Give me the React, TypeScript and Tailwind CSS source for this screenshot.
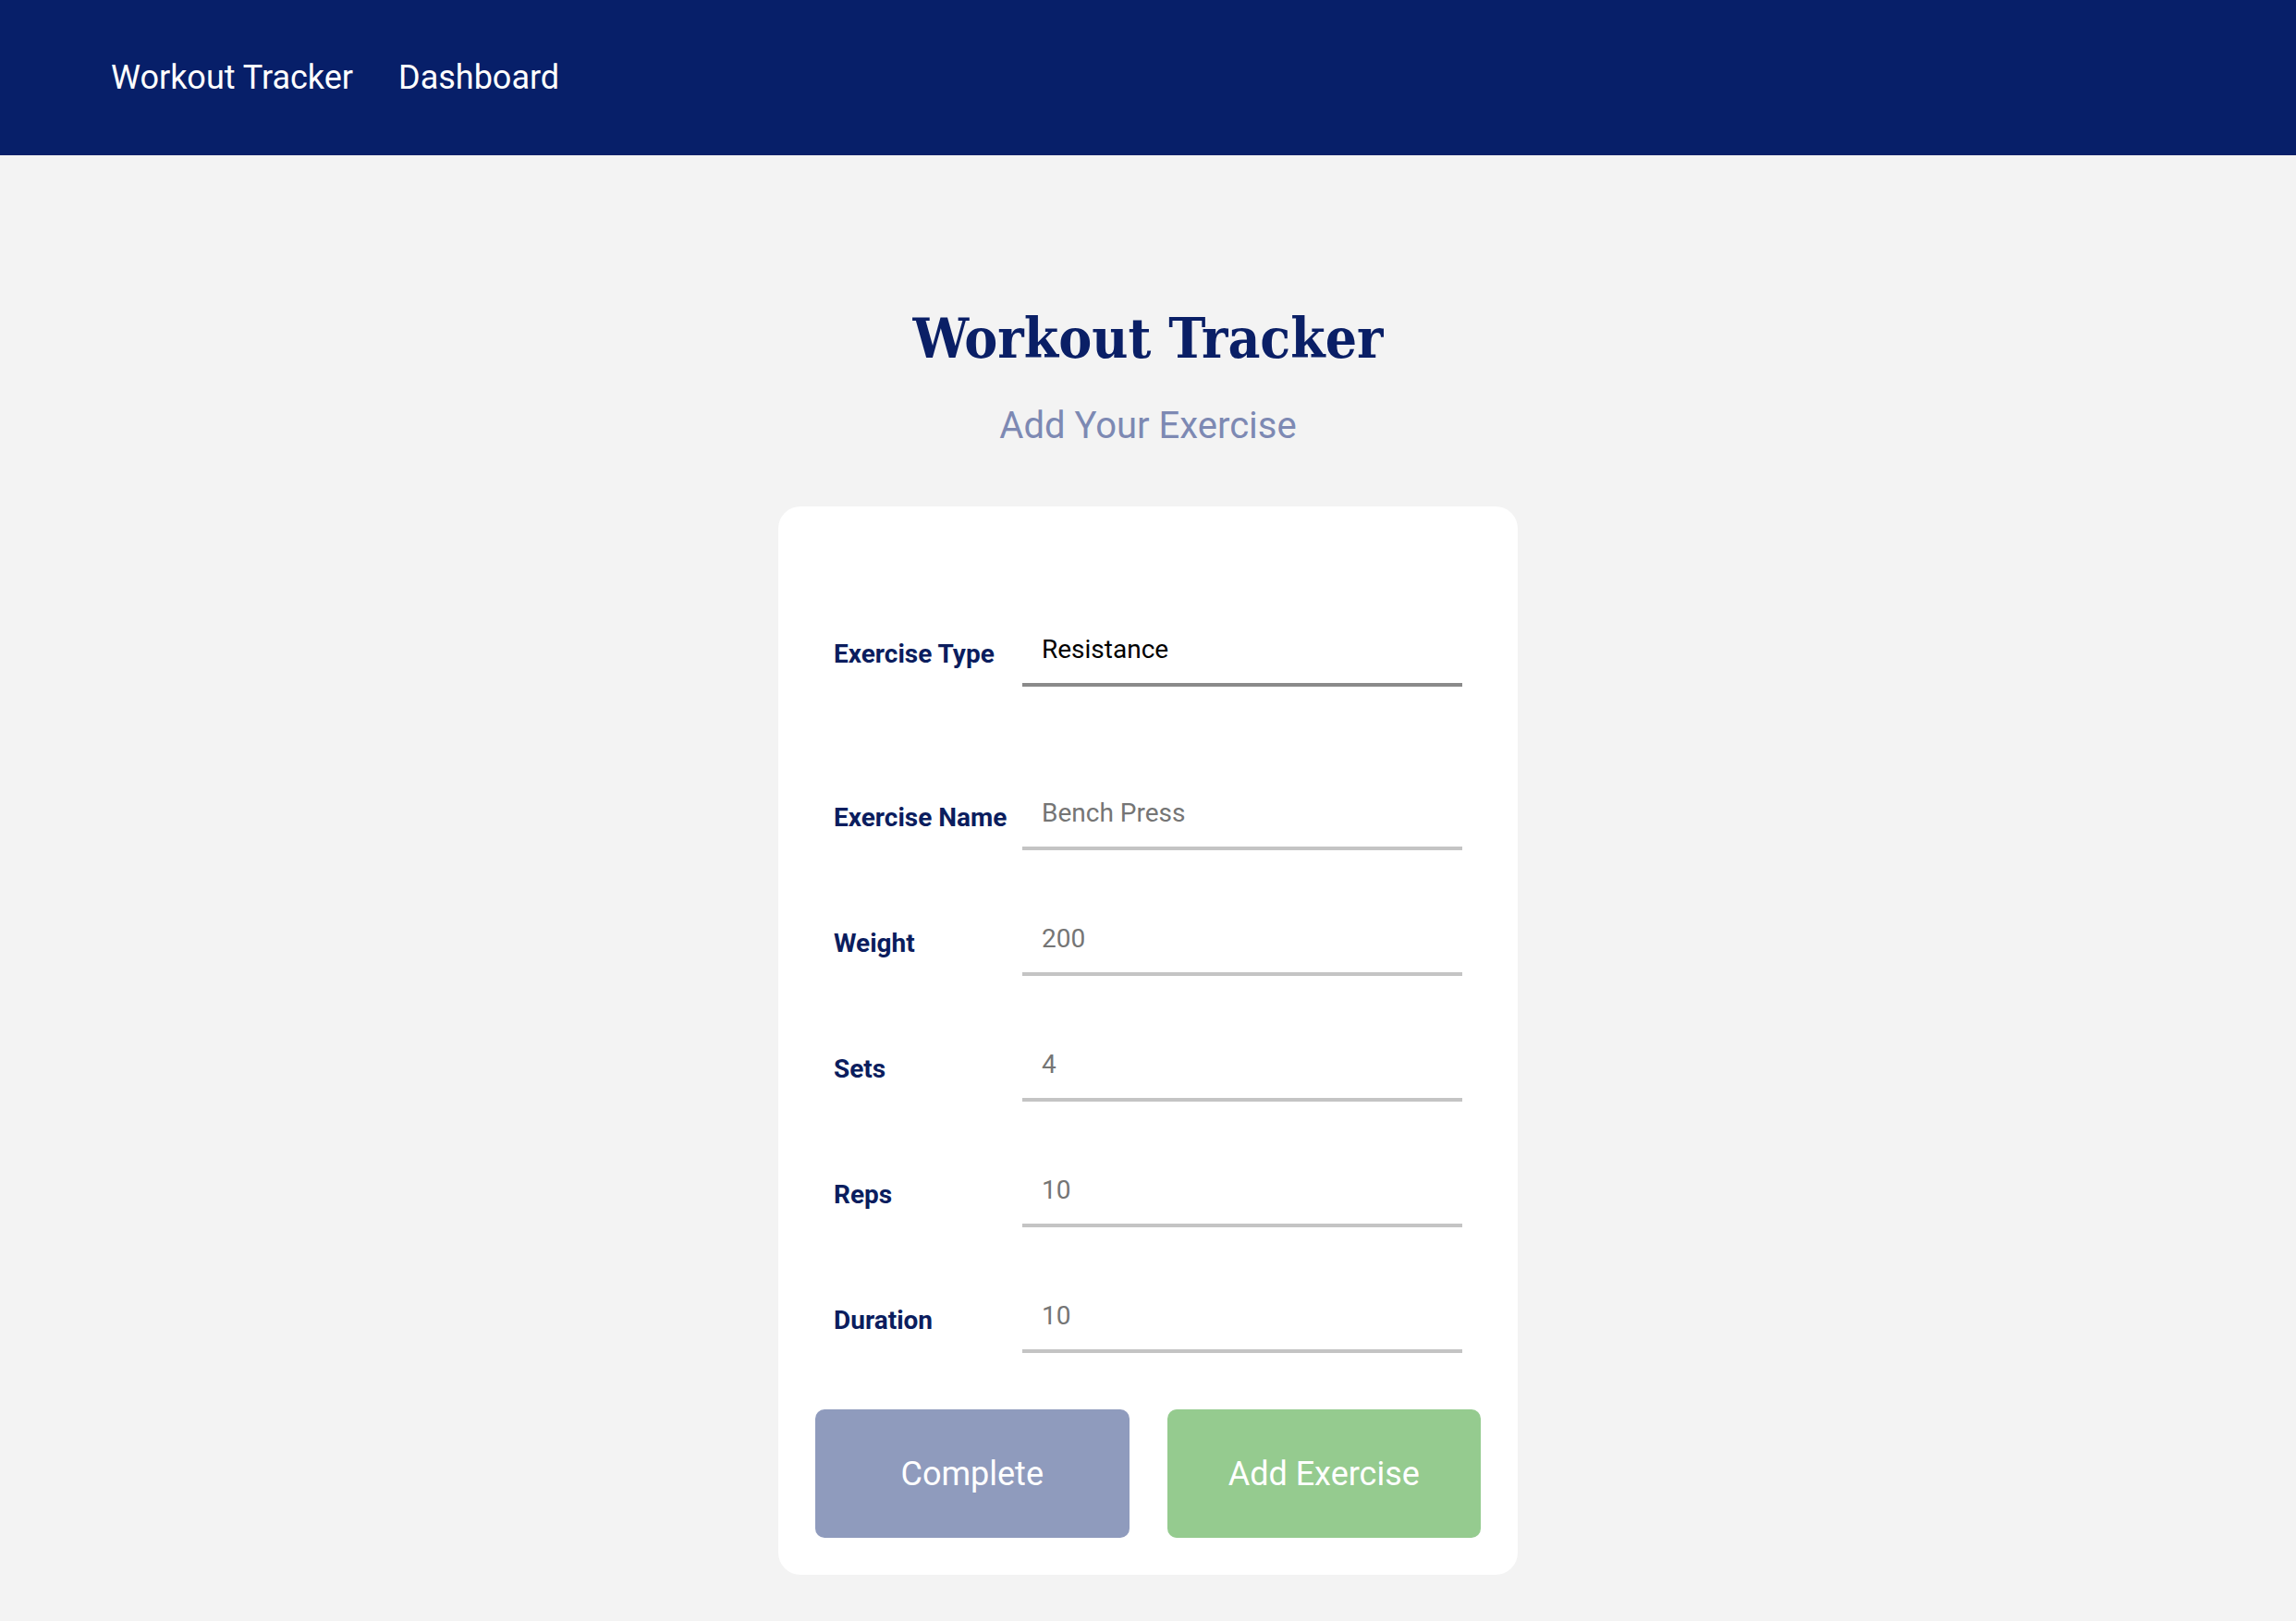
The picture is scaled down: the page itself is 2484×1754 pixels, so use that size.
const fields = [
  { label: "Weight", placeholder: "200" },
  { label: "Sets", placeholder: "4" },
  { label: "Reps", placeholder: "10" },
  { label: "Duration", placeholder: "10" },
];

function Row({ label, value, placeholder, dark }: { label: string; value?: string; placeholder?: string; dark?: boolean }) {
  return (
    <div className="flex items-center h-[80px] pl-[20px] pr-[20px]">
      <label className="w-[204px] shrink-0 pt-[10px] text-[28px] font-bold text-[#0b1d5e]">{label}</label>
      <input
        readOnly
        value={value}
        placeholder={placeholder}
        className={`flex-1 min-w-0 h-full bg-transparent outline-none pl-[21px] pr-[20px] pt-[2px] text-[28px] text-black placeholder:text-[#757575] border-b-4 ${
          dark ? "border-[#8a8a8a]" : "border-[#c4c4c4]"
        }`}
      />
    </div>
  );
}

export default function App() {
  return (
    <div className="min-h-[1754px] bg-[#f3f3f3] font-['Roboto',sans-serif]">
      <nav className="h-[168px] bg-[#071f69] flex items-center gap-[49px] px-[120px] text-white text-[36px]">
        <a href="#">Workout Tracker</a>
        <a href="#">Dashboard</a>
      </nav>

      <main className="flex flex-col items-center pt-[160px]">
        <h1 className="text-[60px] leading-[77px] font-bold text-[#0a1f66] font-['DejaVu_Serif_Condensed','DejaVu_Serif',serif]">
          Workout Tracker
        </h1>
        <h2 className="mt-[32px] text-[40px] leading-[48px] text-[#7d89b3]">Add Your Exercise</h2>

        <div className="mt-[63px] w-[800px] bg-white rounded-[24px] px-[40px] pt-[115px] pb-[40px]">
          <Row label="Exercise Type" value="Resistance" dark />
          <div className="mt-[97px] flex flex-col gap-[56px]">
            <Row label="Exercise Name" placeholder="Bench Press" />
            {fields.map((f) => (
              <Row key={f.label} label={f.label} placeholder={f.placeholder} />
            ))}
          </div>
          <div className="mt-[61px] grid grid-cols-2 gap-[41px]">
            <button className="h-[139px] rounded-[10px] bg-[#8f9bbd] text-white text-[36px]">Complete</button>
            <button className="h-[139px] rounded-[10px] bg-[#95cb8f] text-white text-[36px]">Add Exercise</button>
          </div>
        </div>
      </main>
    </div>
  );
}
